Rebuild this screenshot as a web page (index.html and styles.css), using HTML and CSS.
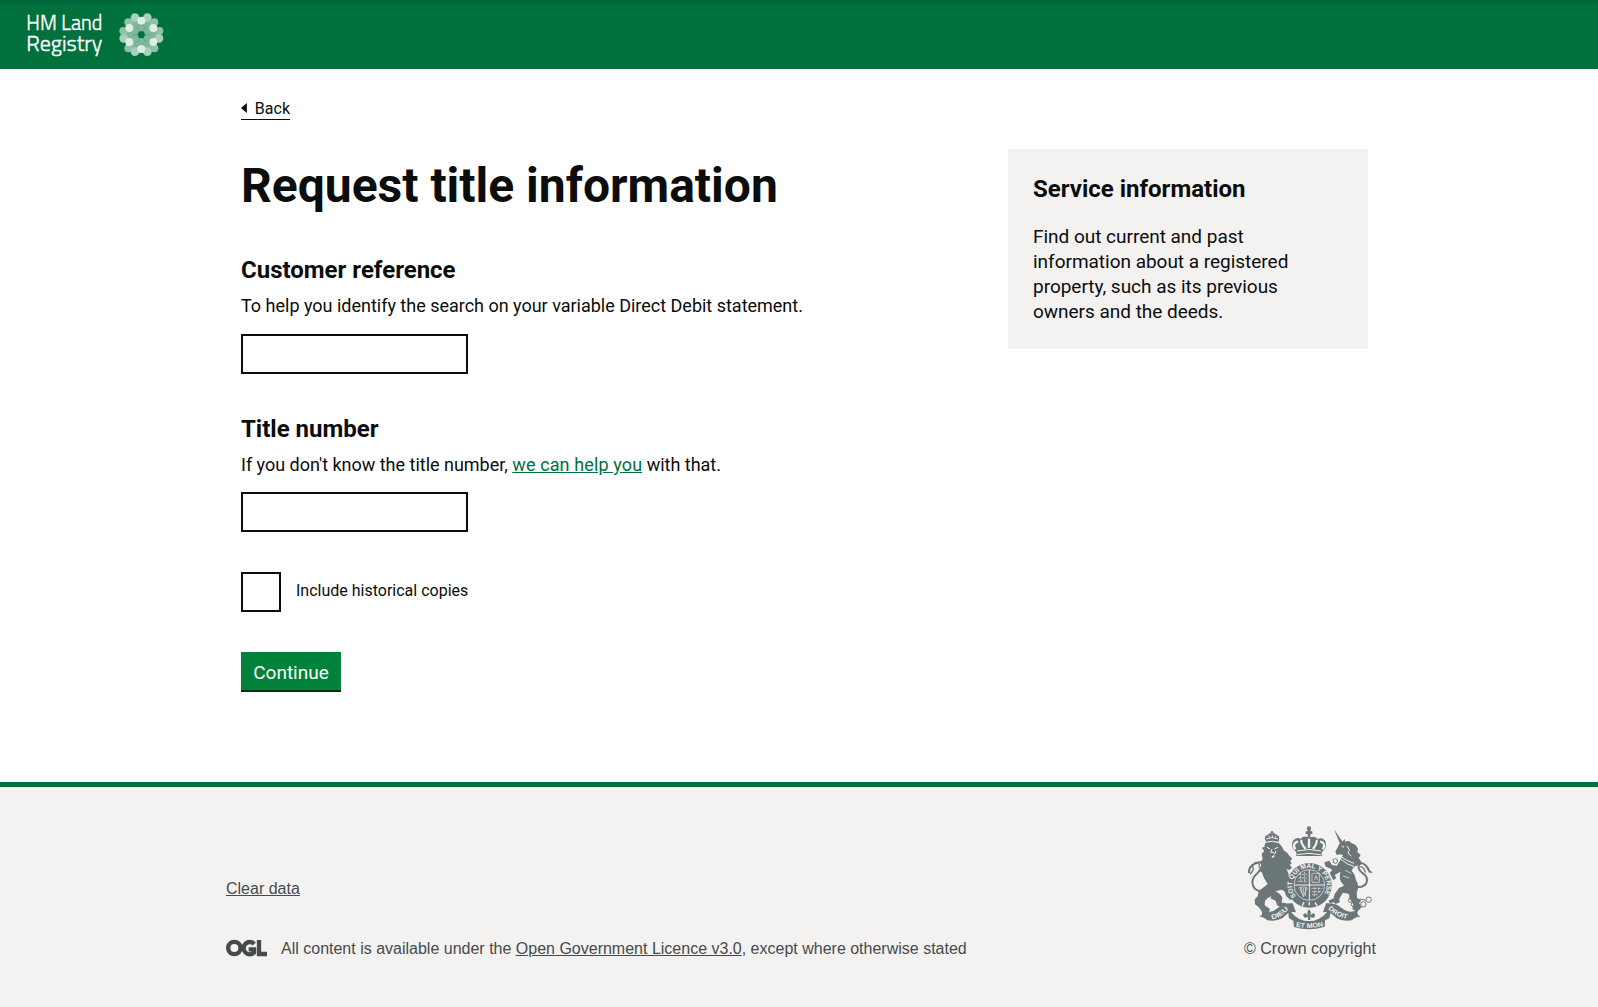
FILE: index.html
```html
<!DOCTYPE html>
<html lang="en">
<head>
<meta charset="utf-8">
<title>Request title information</title>
<link rel="stylesheet" href="styles.css">
</head>
<body>
<header class="header">
  <svg class="logo" width="200" height="69" viewBox="0 0 600 207" role="img" aria-label="HM Land Registry">
    <g class="logo-text">
      <text x="79" y="89" textLength="228" lengthAdjust="spacingAndGlyphs">HM Land</text>
      <text x="79" y="153" textLength="228" lengthAdjust="spacingAndGlyphs">Registry</text>
    </g>
    <circle cx="424" cy="104" r="46" fill="#4a9d75"/>
    <g fill="#7fb99c">
      <circle cx="405" cy="73" r="12"/><circle cx="443" cy="73" r="12"/><circle cx="405" cy="136" r="12"/><circle cx="443" cy="136" r="12"/>
      <circle cx="387" cy="104" r="12"/><circle cx="461" cy="104" r="12"/>
      <circle cx="424" cy="84" r="10"/><circle cx="424" cy="125" r="10"/><circle cx="406" cy="94" r="10"/><circle cx="442" cy="94" r="10"/><circle cx="406" cy="115" r="10"/><circle cx="442" cy="115" r="10"/>
    </g>
    <g fill="#8fc2a8"><circle cx="385" cy="67" r="12"/><circle cx="463" cy="67" r="12"/><circle cx="385" cy="145" r="12"/><circle cx="463" cy="145" r="12"/><circle cx="370" cy="93" r="12"/><circle cx="478" cy="93" r="12"/></g>
    <g fill="#a9d0bc"><circle cx="405" cy="53" r="13"/><circle cx="442" cy="53" r="13"/><circle cx="371" cy="115" r="13"/><circle cx="477" cy="115" r="13"/><circle cx="405" cy="155" r="13"/><circle cx="442" cy="155" r="13"/></g>
    <g fill="#deeee6"><circle cx="424" cy="62" r="12"/><circle cx="460" cy="84" r="12"/><circle cx="460" cy="126" r="12"/><circle cx="424" cy="147" r="12"/><circle cx="388" cy="126" r="12"/><circle cx="388" cy="84" r="12"/></g>
    <circle cx="424" cy="104" r="10" fill="#00703c"/>
  </svg>
</header>

<main class="main">
  <div class="content">
    <a class="back" href="#"><svg class="arrow" width="7" height="10" viewBox="0 0 7 10"><path d="M0 5 6 0V10Z" fill="#0b0c0c"/></svg><span>Back</span></a>
    <h1 class="title">Request title information</h1>
    <form class="form">
      <div class="group">
        <h2 class="subtitle">Customer reference</h2>
        <p class="hint">To help you identify the search on your variable Direct Debit statement.</p>
        <input class="input" type="text" aria-label="Customer reference">
      </div>
      <div class="group">
        <h2 class="subtitle">Title number</h2>
        <p class="hint">If you don't know the title number, <a class="help" href="#">we can help you</a> with that.</p>
        <input class="input" type="text" aria-label="Title number">
      </div>
      <label class="check"><input class="box" type="checkbox"><span class="check-text">Include historical copies</span></label>
      <button class="button" type="button">Continue</button>
    </form>
  </div>
  <aside class="aside">
    <h2 class="subtitle">Service information</h2>
    <p class="aside-text">Find out current and past information about a registered property, such as its previous owners and the deeds.</p>
  </aside>
</main>

<footer class="footer">
  <div class="meta">
    <a class="clear" href="#">Clear data</a>
    <div class="licence">
      <svg class="ogl" width="41" height="18" viewBox="0 0 123 54" fill="none" stroke="#454a4d" stroke-width="13" role="img" aria-label="OGL">
        <circle cx="25" cy="27" r="18.5"/><path d="M85 15A18.5 18.5 0 1 0 84 41V31H68M99 3V45H123"/>
      </svg>
      <span class="licence-text">All content is available under the <a href="#">Open Government Licence v3.0</a>, except where otherwise stated</span>
    </div>
  </div>
  <div class="copyright">
    <svg class="crest" width="132" height="109" viewBox="12 12 396 327" role="img" aria-label="Royal coat of arms">
      <defs>
        <path id="garter" d="M168 229A52 52 0 1 1 248 229"/>
        <path id="dieu" d="M96 298Q122 294 148 266"/>
        <path id="mon" d="M167 319Q207 329 251 318"/>
        <path id="droit" d="M264 267Q289 292 324 297"/>
      </defs>
      <g fill="#6b7678">
        <!-- lion -->
        <path d="M79 67Q69 46 82 46Q88 37 95 41Q104 37 111 45Q122 47 115 67Z"/>
        <circle cx="96" cy="37" r="4"/>
        <path d="M76 69Q94 62 117 70L126 80 132 92Q142 96 147 106L157 117 151 121 155 131 149 134 156 144 147 150 139 146Q148 159 147 176L152 190 143 186 151 202 140 199 132 207Q119 212 108 213L101 226Q86 230 75 242L74 256 90 267 86 278 76 273 68 277 55 260 45 253 44 238 53 229 56 213 72 201 83 192 72 174 66 158 56 150 64 140 61 127 68 116 65 102 73 92 65 84 73 80Z"/>
        <path d="M102 213Q117 216 127 232L125 248 138 249 143 261 126 263 111 256 107 242 91 235Z"/>
        <path d="M127 193 148 204 153 224 165 220 169 232 151 240 139 229 133 214 121 207Z"/>
        <!-- crown -->
        <path d="M169 97Q151 82 158 64Q168 49 182 56Q191 46 203 52V42H197V34H203L201 22H213L211 34H217V42H211V52Q224 46 233 57Q250 50 257 66Q262 84 245 97V108H169Z"/>
        <circle cx="207" cy="25" r="6"/>
        <!-- garter shield -->
        <circle cx="208" cy="196" r="67"/>
        <!-- unicorn -->
        <path d="M282 28 308 66 300 71ZM298 72 307 65 314 57 316 66Q327 59 334 69L347 75 354 86 352 96 362 105 356 114 365 127 351 137Q339 139 335 153Q344 160 347 178Q354 189 355 202L350 219 351 233 364 242 357 250 365 262 351 276 337 267 340 254 329 235 327 222 309 218 298 236 299 247 287 252 281 247 270 250 265 242 281 235 284 222 297 204 312 197 303 185Q296 173 302 155L284 165 289 174 280 181 269 159 277 149 256 139 253 127 268 122 276 135 291 137 299 124 309 105 299 103 290 105 286 94 292 85Z"/>
        <!-- ribbons -->
        <path d="M63 267Q90 285 114 263Q130 248 158 250L168 277Q148 272 137 286Q119 306 82 301Q74 291 57 290Q72 285 63 267Z"/>
        <path d="M356 267Q330 285 304 263Q286 248 258 250L249 277Q269 272 280 286Q298 306 335 301Q344 291 362 290Q346 285 356 267Z"/>
        <path d="M144 274 153 276Q174 303 207 303T261 276L273 273 268 295 255 301 254 320Q209 335 162 321L160 302 147 295Z"/>
      </g>
      <!-- tails -->
      <g fill="none" stroke="#6b7678" stroke-width="6">
        <path d="M60 213Q39 210 37 188Q37 172 51 161Q66 145 67 132Q61 121 43 132Q26 140 27 159"/>
        <path d="M34 136Q48 145 30 163M43 127Q63 127 57 144" stroke-width="4"/>
        <path d="M349 201Q379 203 381 181Q382 168 368 160Q350 145 358 133Q369 124 382 142L390 158"/>
        <path d="M379 139Q388 158 397 157M361 139Q374 143 376 158" stroke-width="4"/>
        <g stroke-width="3"><circle cx="286" cy="123" r="7"/><circle cx="337" cy="233" r="7"/><circle cx="331" cy="241" r="6"/><circle cx="341" cy="253" r="7"/><circle cx="370" cy="253" r="8"/><circle cx="386" cy="239" r="8"/><path d="M348 240Q363 234 378 241M349 253H362"/></g>
      </g>
      <!-- light engraving -->
      <g fill="none" stroke="#f3f2f1" stroke-width="3">
        <path d="M79 57Q95 48 114 57M80 66Q96 61 116 67M87 47V52M97 46V51M107 47V52"/>
        <path d="M80 82 90 86M103 87 114 82M96 87 92 97 102 98M108 92 104 103" stroke-width="3"/>
        <path d="M103 107 96 112" stroke-width="5"/>
        <path d="M166 88Q155 70 174 64M197 87Q180 67 185 60M219 87Q234 67 229 60M248 88Q260 71 241 64M207 56V83" stroke-width="7"/>
        <path d="M171 93Q207 84 243 93M171 104Q207 96 243 104"/>
        <circle cx="208" cy="195" r="46" stroke-width="2"/>
        <path d="M208 150V240M163 195H253" stroke-width="3"/>
        <path d="M176 164H202M175 174H201M173 184H201M182 158V187M194 156V188M214 205H247M215 215H242M216 224H234M224 202V231M236 202V222" stroke-width="2" stroke-dasharray="7 3"/>
        <path d="M218 160H238V187H216V160M224 181 228 167 234 181M179 203 191 230M184 203V218M190 204V224M196 204V228M176 204Q193 197 201 204L190 230" stroke-width="2"/>
        <path d="M305 78 312 82M321 78 328 90 324 100 334 108M296 105Q319 123 342 130M302 117Q322 135 343 140" stroke-width="3"/>
        <path d="M315 151 334 160M309 168 328 174" stroke-width="2"/>
        <path d="M192 246 187 257M208 247V256M225 247 231 257" stroke-width="4"/>
      </g>
      <path d="M190 270H225V301Q207 305 190 301Z" fill="#f3f2f1"/>
      <path d="M204 300V291Q189 298 190 283Q196 275 203 287L202 277 207 267 213 277 211 287Q220 274 225 284Q225 298 211 291V300Z" fill="#6b7678"/>
      <g class="motto">
        <text><textPath href="#garter" textLength="226" lengthAdjust="spacingAndGlyphs">SOIT QUI MAL Y PENSE</textPath></text>
        <text><textPath href="#dieu" textLength="59" lengthAdjust="spacingAndGlyphs">DIEU</textPath></text>
        <text><textPath href="#mon" textLength="84" lengthAdjust="spacingAndGlyphs">ET MON</textPath></text>
        <text><textPath href="#droit" textLength="65" lengthAdjust="spacingAndGlyphs">DROIT</textPath></text>
      </g>
    </svg>
    <span class="crown-text">© Crown copyright</span>
  </div>
</footer>
</body>
</html>
```
FILE: styles.css
```css
* { box-sizing: border-box; }
body { margin: 0; min-height: 1007px; display: flex; flex-direction: column; background: #fff; color: #0b0c0c; font-family: Roboto, sans-serif; }
h1, h2, p { margin: 0; }
.header { height: 69px; background: linear-gradient(#00633a, #00703c 6px); }
.logo { display: block; }
.logo-text { fill: #fff; stroke: #fff; stroke-width: 1.2; font: 300 64px "Titillium Web", "Open Sans", sans-serif; }
.main { height: 713px; padding: 0 230px 0 241px; display: flex; justify-content: space-between; align-items: flex-start; }
.content { width: 620px; padding-top: 29px; }
.back { display: flex; align-items: center; gap: 7px; width: 49px; height: 22px; border-bottom: 1px solid #0b0c0c; color: #0b0c0c; font-size: 16px; line-height: 20px; text-decoration: none; }
.arrow { margin-bottom: 2px; }
.title { margin-top: 41px; font-size: 48px; line-height: 50px; font-weight: 700; white-space: nowrap; }
.form { display: flex; flex-direction: column; align-items: flex-start; }
.group { display: flex; flex-direction: column; align-items: flex-start; }
.group:first-child { margin-top: 44px; }
.group + .group { margin-top: 40px; }
.group + .group .input { margin-top: 15px; }
.subtitle { font-size: 24px; line-height: 30px; font-weight: 700; white-space: nowrap; }
.hint { margin-top: 8px; font-size: 18px; line-height: 25px; letter-spacing: -0.01px; white-space: nowrap; }
.help { color: #00703c; letter-spacing: 0.12px; }
.input { width: 227px; height: 40px; margin: 16px 0 0; padding: 5px; border: 2px solid #0b0c0c; background: #fff; border-radius: 0; font: inherit; }
.check { display: flex; align-items: center; gap: 15px; margin-top: 40px; font-size: 16px; line-height: 20px; }
.check-text { margin-bottom: 2px; }
.box { appearance: none; width: 40px; height: 40px; margin: 0; border: 2px solid #0b0c0c; background: #fff; }
.button { width: 100px; height: 38px; margin-top: 40px; padding: 4px 0 0; border: 0; border-radius: 0; background: #00823b; box-shadow: 0 2px 0 #002d18; color: #fff; font: 400 19px/20px Roboto, sans-serif; }
.aside { width: 360px; height: 200px; margin-top: 80px; padding: 25px 60px 25px 25px; background: #f3f2f1; }
.aside-text { margin-top: 20px; font-size: 19px; line-height: 25px; letter-spacing: -0.02px; }
.footer { flex: 1; padding: 39px 222px 0 226px; border-top: 5px solid #00703c; background: #f3f2f1; display: flex; justify-content: space-between; color: #454a4d; font: 16px/20px "Liberation Sans", Arial, sans-serif; }
.footer a { color: #454a4d; }
.meta { padding-top: 53px; }
.clear { display: inline-block; }
.licence { display: flex; align-items: flex-start; gap: 14px; margin-top: 40px; white-space: nowrap; }
.copyright { width: 132px; display: flex; flex-direction: column; align-items: center; margin-top: -2px; }
.crest { display: block; margin-bottom: 6px; overflow: visible; }
.crown-text { white-space: nowrap; }
.motto { fill: #f3f2f1; font: 700 20px "Liberation Sans", Arial, sans-serif; }
```
